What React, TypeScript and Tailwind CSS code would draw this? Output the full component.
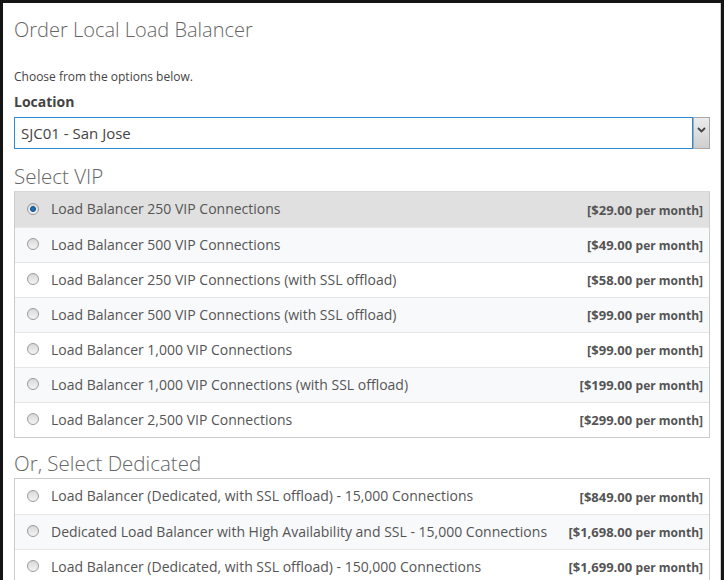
import React from 'react';

const vip = [
  { name: 'Load Balancer 250 VIP Connections', price: '$29.00' },
  { name: 'Load Balancer 500 VIP Connections', price: '$49.00' },
  { name: 'Load Balancer 250 VIP Connections (with SSL offload)', price: '$58.00' },
  { name: 'Load Balancer 500 VIP Connections (with SSL offload)', price: '$99.00' },
  { name: 'Load Balancer 1,000 VIP Connections', price: '$99.00' },
  { name: 'Load Balancer 1,000 VIP Connections (with SSL offload)', price: '$199.00' },
  { name: 'Load Balancer 2,500 VIP Connections', price: '$299.00' },
];

const dedicated = [
  { name: 'Load Balancer (Dedicated, with SSL offload) - 15,000 Connections', price: '$849.00' },
  { name: 'Dedicated Load Balancer with High Availability and SSL - 15,000 Connections', price: '$1,698.00' },
  { name: 'Load Balancer (Dedicated, with SSL offload) - 150,000 Connections', price: '$1,699.00' },
];

function Radio({ on }: { on?: boolean }) {
  return (
    <span className="w-[12px] h-[12px] rounded-full border border-[#9a9a9a] bg-gradient-to-b from-[#d8d8d8] to-[#f4f4f4] flex items-center justify-center shrink-0">
      {on && <span className="w-[6px] h-[6px] rounded-full bg-[#1d6fb8] border border-[#0d4d86]" />}
    </span>
  );
}

function Row({ name, price, selected, striped }: { name: string; price: string; selected?: boolean; striped?: boolean }) {
  return (
    <div
      className={
        'h-[35px] flex items-center pl-[12px] pr-[6px] pb-[2px] border-t border-[#e6e6e6] first:border-t-0 ' +
        (selected ? 'bg-[#e0e0e0]' : striped ? 'bg-[#f8f9fb]' : 'bg-white')
      }
    >
      <Radio on={selected} />
      <span className="ml-[12px] text-[14px] text-[#555] whitespace-nowrap">{name}</span>
      <span className="ml-auto font-bold text-[#555] whitespace-nowrap">
        <span className="text-[13px]">[{price} </span>
        <span className="text-[12px]">per month]</span>
      </span>
    </div>
  );
}

export default function App() {
  return (
    <div className="w-[724px] h-[580px] bg-[#141414] pt-[3px] pl-[3px] pr-[3px] overflow-hidden" style={{ fontFamily: '"Open Sans", "Liberation Sans", sans-serif' }}>
      <div className="bg-white h-full border-r border-[#cfcfcf] pl-[11px] pr-[10px]">
        <h1 className="text-[20px] font-light text-[#666] pt-[14px] leading-[26px]">Order Local Load Balancer</h1>
        <p className="text-[12px] text-[#444] mt-[26px] leading-[16px]">Choose from the options below.</p>
        <p className="text-[14px] font-bold text-[#444] mt-[8px] leading-[18px]">Location</p>
        <div className="mt-[6px] flex h-[32px]">
          <div className="flex-1 border border-[#2b8bd6] flex items-center pl-[6px] text-[15px] text-[#444]">SJC01 - San Jose</div>
          <div className="w-[17px] border border-[#a8a8a8] bg-gradient-to-b from-[#ececec] to-[#cfcfcf] flex items-start justify-center pt-[9px]">
            <svg width="9" height="6" viewBox="0 0 9 6"><path d="M1 1l3.5 3.5L8 1" stroke="#444" strokeWidth="1.8" fill="none" /></svg>
          </div>
        </div>
        <h2 className="text-[20.5px] font-light text-[#666] mt-[14px] leading-[26px]">Select VIP</h2>
        <div className="mt-[2px] border border-[#cccccc] border-t-[#d8d8d8]">
          {vip.map((r, i) => (
            <Row key={r.name} name={r.name} price={r.price} selected={i === 0} striped={i % 2 === 1} />
          ))}
        </div>
        <h2 className="text-[20.5px] font-light text-[#666] mt-[12px] leading-[26px]">Or, Select Dedicated</h2>
        <div className="mt-[2px] border border-[#cccccc]">
          {dedicated.map((r, i) => (
            <Row key={r.name} name={r.name} price={r.price} striped={i % 2 === 1} />
          ))}
        </div>
      </div>
    </div>
  );
}
